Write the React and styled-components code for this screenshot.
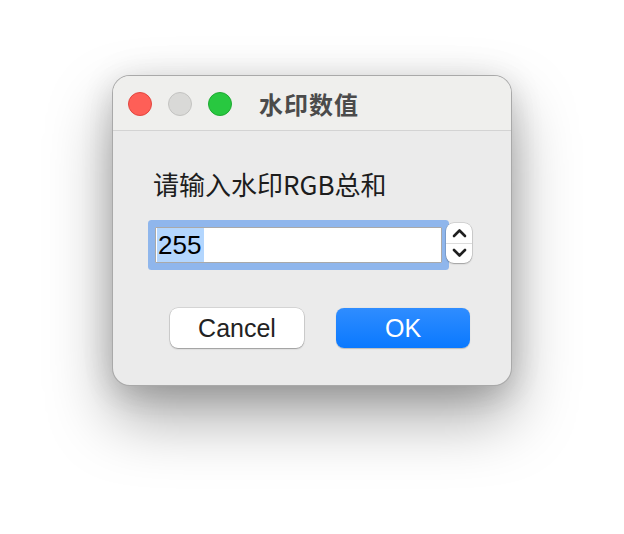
import React from "react";
import styled, { createGlobalStyle } from "styled-components";

const Global = createGlobalStyle`
  html, body { margin: 0; padding: 0; background: #ffffff; }
  body { font-family: "Liberation Sans", "Noto Sans CJK SC", sans-serif; }
`;

const Stage = styled.div`
  width: 624px;
  height: 534px;
  box-sizing: border-box;
  padding: 75px 0 0 112px;
  background: #ffffff;
  overflow: hidden;
`;

const Window = styled.div`
  width: 400px;
  height: 311px;
  box-sizing: border-box;
  border-radius: 18px;
  border: 1px solid rgba(0, 0, 0, 0.28);
  background: #ebebeb;
  overflow: hidden;
  display: flex;
  flex-direction: column;
  box-shadow: 0 32px 64px rgba(0, 0, 0, 0.34), 0 10px 30px rgba(0, 0, 0, 0.12),
    0 0 40px rgba(0, 0, 0, 0.06);
`;

const TitleBar = styled.div`
  height: 55px;
  flex: none;
  box-sizing: border-box;
  background: #efefed;
  border-bottom: 1px solid #d3d3d3;
  display: grid;
  grid-template-columns: 1fr auto 1fr;
  align-items: center;
  padding: 2px 15px 0 15px;
`;

const Lights = styled.div`
  display: flex;
  gap: 16px;
  align-items: center;
`;

const Light = styled.span`
  width: 24px;
  height: 24px;
  box-sizing: border-box;
  border-radius: 50%;
  background: ${(p) => p.$c};
  border: 1px solid ${(p) => p.$b};
`;

const Title = styled.div`
  font-family: "Noto Sans CJK SC", sans-serif;
  font-weight: 700;
  font-size: 24px;
  letter-spacing: 1px;
  line-height: 28px;
  color: #4b4b4b;
  margin-left: -6px;
`;

const Body = styled.div`
  flex: 1;
  display: flex;
  flex-direction: column;
  padding: 37px 0 0 40px;
`;

const Label = styled.div`
  font-family: "Noto Sans CJK SC", sans-serif;
  font-size: 26px;
  line-height: 32px;
  color: #1d1d1d;
`;

const FieldRow = styled.div`
  display: flex;
  align-items: flex-end;
  margin-top: 23px;
  margin-left: 2px;
`;

const Field = styled.div`
  width: 287px;
  height: 36px;
  box-sizing: border-box;
  background: #ffffff;
  border: 1px solid #a9a9a9;
  box-shadow: 0 0 0 7px #8fb6ec;
  border-radius: 1px;
  padding: 0 0 0 1px;
  display: flex;
  align-items: stretch;
`;

const Selected = styled.span`
  background: #b3d6fe;
  color: #000000;
  font-family: "Liberation Sans", sans-serif;
  font-size: 26px;
  line-height: 34px;
  padding: 0 3px 0 1px;
`;

const Stepper = styled.div`
  position: relative;
  z-index: 1;
  margin-left: 4px;
  width: 26px;
  height: 40px;
  box-sizing: border-box;
  border-radius: 8px;
  background: #ffffff;
  box-shadow: 0 0 0 0.5px rgba(0, 0, 0, 0.2), 0 1px 1.5px rgba(0, 0, 0, 0.25);
  display: flex;
  flex-direction: column;
`;

const StepHalf = styled.div`
  flex: 1;
  display: flex;
  align-items: center;
  justify-content: center;
  border-top: ${(p) => (p.$divider ? "1px solid #dcdcdc" : "none")};
`;

const Buttons = styled.div`
  display: flex;
  gap: 32px;
  margin-top: 45px;
  margin-left: 17px;
`;

const Button = styled.div`
  width: 134px;
  height: 40px;
  box-sizing: border-box;
  border-radius: 8px;
  display: flex;
  align-items: center;
  justify-content: center;
  font-family: "Liberation Sans", sans-serif;
  font-size: 25px;
  color: ${(p) => (p.$primary ? "#ffffff" : "#222222")};
  background: ${(p) =>
    p.$primary ? "linear-gradient(#2f8dff, #0a79ff)" : "#ffffff"};
  box-shadow: ${(p) =>
    p.$primary
      ? "0 0.5px 1px rgba(0,0,0,0.2)"
      : "0 0 0 0.5px rgba(0,0,0,0.18), 0 1px 1.5px rgba(0,0,0,0.28)"};
`;

const Chevron = ({ up }) => (
  <svg width="15" height="10" viewBox="0 0 15 10">
    <path
      d={up ? "M2 8 L7.5 2.5 L13 8" : "M2 2 L7.5 7.5 L13 2"}
      fill="none"
      stroke="#1f1f1f"
      strokeWidth="2.6"
      strokeLinecap="round"
      strokeLinejoin="round"
    />
  </svg>
);

export default function App() {
  return (
    <>
      <Global />
      <Stage>
        <Window>
          <TitleBar>
            <Lights>
              <Light $c="#fe5f57" $b="#e2463f" />
              <Light $c="#d9d9d7" $b="#c3c3c1" />
              <Light $c="#28c840" $b="#1ea931" />
            </Lights>
            <Title>水印数值</Title>
            <span />
          </TitleBar>
          <Body>
            <Label>请输入水印RGB总和</Label>
            <FieldRow>
              <Field>
                <Selected>255</Selected>
              </Field>
              <Stepper>
                <StepHalf>
                  <Chevron up />
                </StepHalf>
                <StepHalf $divider>
                  <Chevron />
                </StepHalf>
              </Stepper>
            </FieldRow>
            <Buttons>
              <Button>Cancel</Button>
              <Button $primary>OK</Button>
            </Buttons>
          </Body>
        </Window>
      </Stage>
    </>
  );
}
